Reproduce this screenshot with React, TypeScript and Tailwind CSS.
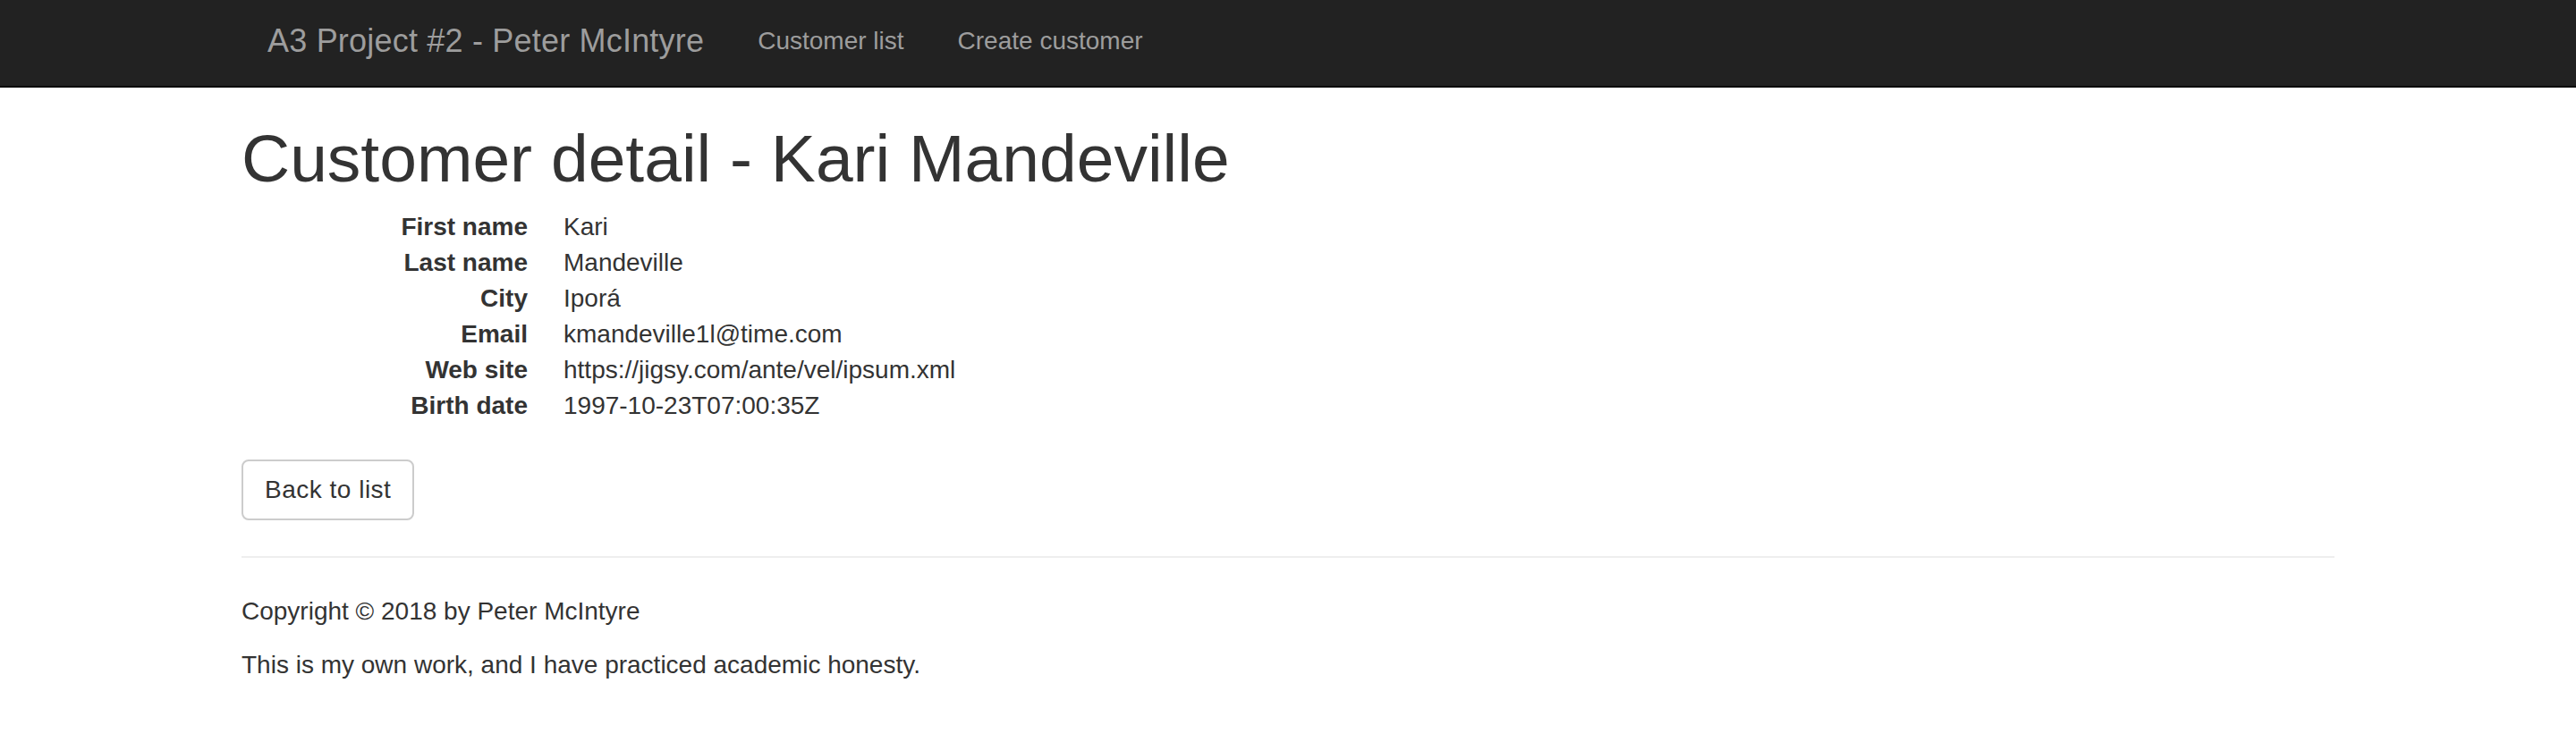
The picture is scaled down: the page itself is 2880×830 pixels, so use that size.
import React from "react";

const rows: [string, string][] = [
  ["First name", "Kari"],
  ["Last name", "Mandeville"],
  ["City", "Iporá"],
  ["Email", "kmandeville1l@time.com"],
  ["Web site", "https://jigsy.com/ante/vel/ipsum.xml"],
  ["Birth date", "1997-10-23T07:00:35Z"],
];

export default function App() {
  return (
    <div
      className="min-h-[830px] bg-white text-[#333]"
      style={{ fontFamily: '"Liberation Sans", Arial, sans-serif' }}
    >
      <nav className="h-[98px] bg-[#222] border-b-2 border-[#080808]">
        <div className="mx-auto w-[2340px] flex items-start pt-[26px]">
          <a className="pl-[29px] pr-[30px] text-[36px] leading-[40px] tracking-[0.2px] text-[#9d9d9d]">
            A3 Project #2 - Peter McIntyre
          </a>
          <a className="px-[30px] text-[28px] leading-[40px] text-[#9d9d9d]">Customer list</a>
          <a className="px-[30px] text-[28px] leading-[40px] text-[#9d9d9d]">Create customer</a>
        </div>
      </nav>
      <div className="mx-auto w-[2340px]">
        <h1 className="mt-[39px] mb-[17px] text-[75px] leading-[80px] font-normal text-[#333]">
          Customer detail - Kari Mandeville
        </h1>
        <dl className="mb-[40px] text-[28px] leading-[40px]">
          {rows.map(([k, v]) => (
            <div key={k} className="flex">
              <dt className="w-[320px] text-right font-bold">{k}</dt>
              <dd className="ml-[40px]">{v}</dd>
            </div>
          ))}
        </dl>
        <div>
          <button className="h-[68px] px-[24px] border-2 border-[#ccc] rounded-[8px] bg-white text-[28px] leading-[40px] tracking-[0.5px] text-[#333]">
            Back to list
          </button>
        </div>
        <hr className="mt-[40px] mb-[40px] border-0 border-t-2 border-[#eee]" />
        <footer className="text-[28px] leading-[40px]">
          <p className="mb-[20px]">Copyright © 2018 by Peter McIntyre</p>
          <p className="mb-[20px]">This is my own work, and I have practiced academic honesty.</p>
        </footer>
      </div>
    </div>
  );
}
